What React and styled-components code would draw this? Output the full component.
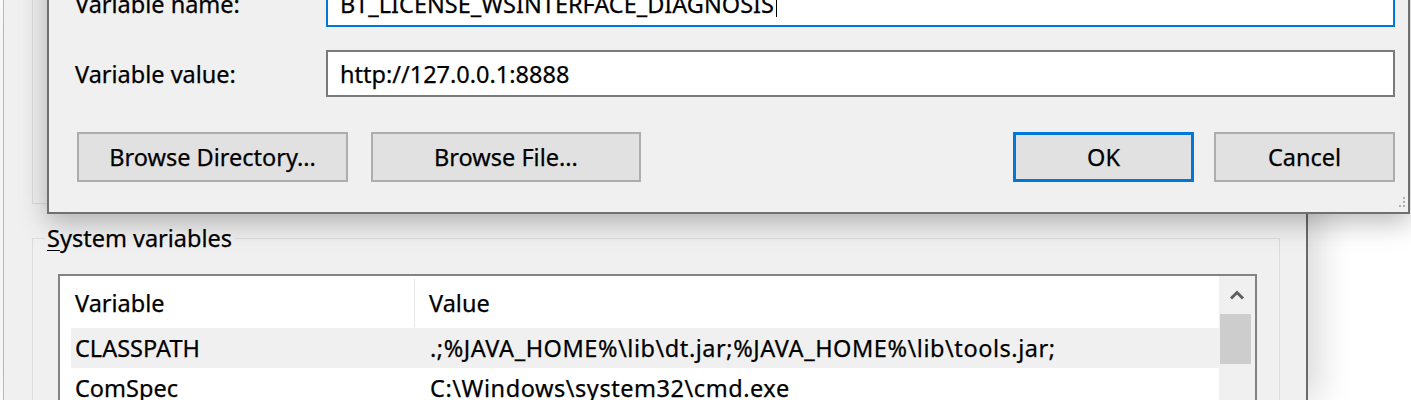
import React from "react";
import styled, { createGlobalStyle } from "styled-components";

const GlobalStyle = createGlobalStyle`
  html, body {
    margin: 0;
    padding: 0;
    background: #ffffff;
  }
  body {
    font-family: "Noto Sans", "Open Sans", sans-serif;
    color: #000;
  }
`;

const FONT = `"Noto Sans", "Open Sans", sans-serif`;
const SIZE = "23.5px";

const Desktop = styled.div`
  position: relative;
  width: 1411px;
  height: 400px;
  overflow: hidden;
  background: #ffffff;
  -webkit-text-stroke: 0.25px #000;
`;

const BackWindow = styled.div`
  box-sizing: border-box;
  margin-left: 3px;
  width: 1305px;
  height: 100%;
  padding-left: 28px;
  background: #f0f0f0;
  border-left: 1px solid #b9b9b9;
  border-right: 2px solid #6a6a6a;
  box-shadow: 10px 0 34px rgba(0, 0, 0, 0.16);
  display: flex;
  flex-direction: column;
`;

const UserGroup = styled.div`
  flex-shrink: 0;
  height: 203px;
  width: 1248px;
  border-left: 1px solid #dcdcdc;
  border-bottom: 1px solid #dcdcdc;
`;

const Group = styled.fieldset`
  flex-shrink: 0;
  margin: 20px 0 0 0;
  padding: 0;
  width: 1248px;
  height: 240px;
  box-sizing: border-box;
  min-width: 0;
  border: 1px solid #dcdcdc;
`;

const Legend = styled.legend`
  margin-left: 12px;
  padding: 0 2px;
  font-family: ${FONT};
  font-size: ${SIZE};
  line-height: 28px;
  color: #000;

  u {
    text-decoration-thickness: 1px;
    text-underline-offset: 3px;
  }
`;

const List = styled.div`
  box-sizing: border-box;
  margin: 22px 0 0 25px;
  width: 1199px;
  height: 200px;
  border: 2px solid #838383;
  border-bottom: none;
  background: #ffffff;
  display: flex;
`;

const Table = styled.div`
  flex: 1;
  padding-left: 11px;
  display: flex;
  flex-direction: column;
`;

const HeaderRow = styled.div`
  display: flex;
  height: 52px;
`;

const HeaderCell = styled.div`
  box-sizing: border-box;
  width: ${(p) => p.$w || "auto"};
  flex: ${(p) => (p.$w ? "none" : 1)};
  padding-left: ${(p) => p.$pad}px;
  display: flex;
  align-items: center;
  font-family: ${FONT};
  font-size: ${SIZE};
  margin: 3px 0 1px;
  border-right: ${(p) => (p.$divider ? "1px solid #e5e5e5" : "none")};
`;

const Row = styled.div`
  display: flex;
  height: 40px;
  align-items: center;
  background: ${(p) => (p.$shaded ? "#f0f0f0" : "transparent")};
`;

const Cell = styled.div`
  box-sizing: border-box;
  width: ${(p) => p.$w || "auto"};
  flex: ${(p) => (p.$w ? "none" : 1)};
  padding-left: ${(p) => p.$pad}px;
  font-family: ${FONT};
  font-size: ${SIZE};
  letter-spacing: ${(p) => (p.$path ? "0.55px" : "normal")};
  white-space: nowrap;
`;

const ScrollBar = styled.div`
  width: 36px;
  background: #f0f0f0;
  display: flex;
  flex-direction: column;
  align-items: flex-start;
`;

const ScrollArrow = styled.div`
  width: 36px;
  height: 38px;
  display: flex;
  align-items: center;
  justify-content: center;
`;

const Thumb = styled.div`
  margin-left: 1px;
  width: 31px;
  height: 50px;
  background: #cdcdcd;
`;

const Dialog = styled.div`
  position: absolute;
  left: 47px;
  top: -40px;
  box-sizing: border-box;
  width: 1363px;
  height: 254px;
  background: #f0f0f0;
  border: 2px solid #707070;
  box-shadow: 0 8px 26px rgba(0, 0, 0, 0.28);
  padding: 18px 0 0 26px;
`;

const Form = styled.div`
  display: grid;
  grid-template-columns: 251px 1069px;
  row-gap: 23px;
  align-items: center;
`;

const Label = styled.div`
  font-family: ${FONT};
  font-size: ${SIZE};
`;

const Field = styled.div`
  box-sizing: border-box;
  height: 47px;
  background: #ffffff;
  border: 2px solid ${(p) => (p.$focused ? "#0078d7" : "#7a7a7a")};
  padding-left: 12px;
  display: flex;
  align-items: center;
  font-family: ${FONT};
  font-size: ${SIZE};
  white-space: nowrap;
`;

const Caret = styled.span`
  display: inline-block;
  width: 1px;
  height: 26px;
  margin-left: 2px;
  background: #000;
`;

const Buttons = styled.div`
  display: flex;
  margin: 35px 0 0 2px;
  width: 1318px;
  gap: 23px;
`;

const Spacer = styled.div`
  flex: 1;
`;

const Button = styled.div`
  box-sizing: border-box;
  width: ${(p) => p.$w}px;
  height: 50px;
  background: #e1e1e1;
  border: ${(p) => (p.$default ? "3px solid #0078d7" : "2px solid #adadad")};
  display: flex;
  align-items: center;
  justify-content: center;
  font-family: ${FONT};
  font-size: ${SIZE};
  margin-left: ${(p) => p.$ml || 0}px;
`;

const Grip = styled.svg`
  position: absolute;
  right: 2px;
  bottom: 4px;
`;

export default function App() {
  return (
    <>
      <GlobalStyle />
      <Desktop>
        <BackWindow>
          <UserGroup />
          <Group>
            <Legend>
              <u>S</u>ystem variables
            </Legend>
            <List>
              <Table>
                <HeaderRow>
                  <HeaderCell $w="344px" $pad={4} $divider>
                    Variable
                  </HeaderCell>
                  <HeaderCell $pad={14}>Value</HeaderCell>
                </HeaderRow>
                <Row $shaded>
                  <Cell $w="344px" $pad={4}>
                    CLASSPATH
                  </Cell>
                  <Cell $pad={15} $path>
                    .;%JAVA_HOME%\lib\dt.jar;%JAVA_HOME%\lib\tools.jar;
                  </Cell>
                </Row>
                <Row>
                  <Cell $w="344px" $pad={4}>
                    ComSpec
                  </Cell>
                  <Cell $pad={15} $path>
                    C:\Windows\system32\cmd.exe
                  </Cell>
                </Row>
              </Table>
              <ScrollBar>
                <ScrollArrow>
                  <svg width="16" height="12" viewBox="0 0 16 12">
                    <path d="M2 9.5 L8 3.5 L14 9.5" fill="none" stroke="#5f5f5f" strokeWidth="3" />
                  </svg>
                </ScrollArrow>
                <Thumb />
              </ScrollBar>
            </List>
          </Group>
        </BackWindow>

        <Dialog>
          <Form>
            <Label>Variable name:</Label>
            <Field $focused>
              BT_LICENSE_WSINTERFACE_DIAGNOSIS
              <Caret />
            </Field>
            <Label>Variable value:</Label>
            <Field>http://127.0.0.1:8888</Field>
          </Form>
          <Buttons>
            <Button $w={271}>Browse Directory...</Button>
            <Button $w={270}>Browse File...</Button>
            <Spacer />
            <Button $w={181} $default>
              OK
            </Button>
            <Button $w={181} $ml={-3}>
              Cancel
            </Button>
          </Buttons>
          <Grip width="8" height="12" viewBox="0 0 8 12">
            <rect x="5" y="1" width="2" height="2" fill="#b0b0b0" />
            <rect x="5" y="5" width="2" height="2" fill="#b0b0b0" />
            <rect x="1" y="9" width="2" height="2" fill="#b0b0b0" />
            <rect x="5" y="9" width="2" height="2" fill="#b0b0b0" />
          </Grip>
        </Dialog>
      </Desktop>
    </>
  );
}
